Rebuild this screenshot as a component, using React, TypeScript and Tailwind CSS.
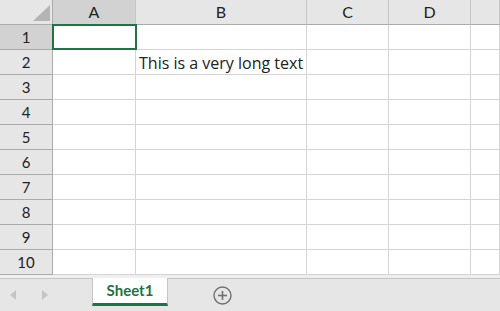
import React from "react";

const cols = [
  { name: "A", w: 83 },
  { name: "B", w: 171 },
  { name: "C", w: 82 },
  { name: "D", w: 82 },
  { name: "", w: 29 },
];

export default function App() {
  const rows = Array.from({ length: 10 }, (_, i) => i + 1);
  return (
    <div className="w-[500px] h-[311px] bg-white overflow-hidden flex flex-col text-[#222] font-['Lato']">
      {/* column headers */}
      <div className="flex h-[25px] shrink-0">
        <div className="w-[53px] h-[25px] shrink-0 bg-[#e6e6e6] border-r border-b border-[#ababab] relative">
          <svg className="absolute left-[33px] top-[5px]" width="17" height="16" viewBox="0 0 17 16">
            <polygon points="17,0 17,16 0,16" fill="#b4b4b4" />
          </svg>
        </div>
        {cols.map((c, i) => (
          <div
            key={i}
            className={
              i === 0
                ? "h-[25px] shrink-0 bg-[#d2d2d2] border-r border-[#c6c6c6] border-b border-b-[#217346] flex items-center justify-center text-[16px]"
                : "h-[25px] shrink-0 bg-[#e6e6e6] border-r border-[#c6c6c6] border-b border-b-[#ababab] flex items-center justify-center text-[16px]"
            }
            style={{ width: c.w }}
          >
            {c.name}
          </div>
        ))}
      </div>
      {/* rows */}
      {rows.map((r) => (
        <div key={r} className="flex h-[25px] shrink-0">
          <div
            className={
              r === 1
                ? "w-[53px] shrink-0 bg-[#d2d2d2] border-r border-r-[#217346] border-b border-b-[#ababab] flex items-center justify-center text-[15px]"
                : "w-[53px] shrink-0 bg-[#e6e6e6] border-r border-r-[#ababab] border-b border-b-[#ababab] flex items-center justify-center text-[15px]"
            }
          >
            {r}
          </div>
          {cols.map((c, i) => (
            <div
              key={i}
              className="shrink-0 border-r border-b border-[#d4d4d4] relative"
              style={{ width: c.w }}
            >
              {r === 1 && i === 0 && (
                <div className="absolute left-[-1px] top-[-1px] w-[85px] h-[26px] border-2 border-[#217346] z-10" />
              )}
              {r === 2 && i === 1 && (
                <div className="absolute left-[3px] bottom-[1px] whitespace-nowrap text-[16px] leading-[20px] font-['Open_Sans']">
                  This is a very long text
                </div>
              )}
            </div>
          ))}
        </div>
      ))}
      {/* tab bar */}
      <div className="flex-1 flex flex-col bg-[#e6e6e6]">
        <div className="h-[4px] bg-[#efefef] border-b border-[#c6c6c6] shrink-0" />
        <div className="flex-1 flex items-start">
          <div className="w-[92px] h-full flex items-center gap-[22px] pl-[10px]">
            <svg width="6" height="10" viewBox="0 0 6 10">
              <polygon points="6,0 6,10 0,5" fill="#c4c4c4" />
            </svg>
            <svg width="6" height="10" viewBox="0 0 6 10" className="ml-[4px]">
              <polygon points="0,0 0,10 6,5" fill="#c4c4c4" />
            </svg>
          </div>
          <div className="w-[76px] h-[28px] -mt-[1px] bg-white border-x border-[#c6c6c6] border-b-[3px] border-b-[#217346] flex items-center justify-center text-[15px] font-bold text-[#217346]">
            Sheet1
          </div>
          <div className="ml-[45px] h-full flex items-center">
            <svg width="19" height="19" viewBox="0 0 19 19">
              <circle cx="9.5" cy="9.5" r="8.5" fill="none" stroke="#707070" strokeWidth="1.4" />
              <line x1="9.5" y1="5" x2="9.5" y2="14" stroke="#707070" strokeWidth="1.6" />
              <line x1="5" y1="9.5" x2="14" y2="9.5" stroke="#707070" strokeWidth="1.6" />
            </svg>
          </div>
        </div>
      </div>
    </div>
  );
}
